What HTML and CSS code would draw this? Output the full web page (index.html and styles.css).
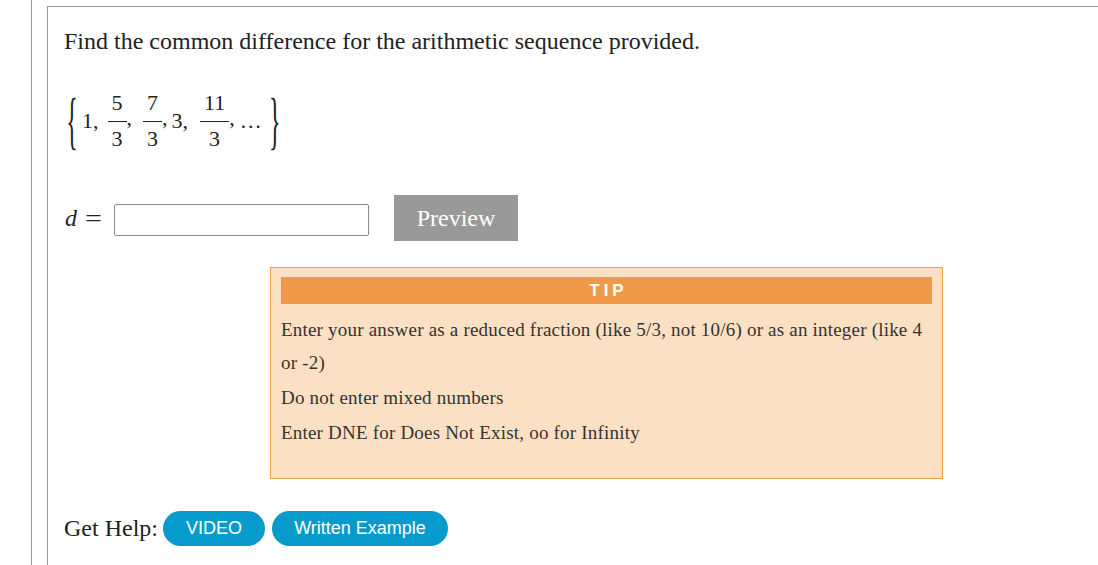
FILE: index.html
```html
<!DOCTYPE html>
<html>
<head>
<meta charset="utf-8">
<link rel="stylesheet" href="styles.css">
</head>
<body>
<div class="page">
  <div class="question">
    <p class="prompt">Find the common difference for the arithmetic sequence provided.</p>
    <div class="math">
      <span class="brace brace-open">{</span>
      <span class="num num-one">1,</span>
      <span class="frac frac-a"><span class="top">5</span><span class="bot">3</span></span>
      <span class="comma comma-a">,</span>
      <span class="frac"><span class="top">7</span><span class="bot">3</span></span>
      <span class="comma comma-b">,</span>
      <span class="num num-three">3,</span>
      <span class="frac"><span class="top">11</span><span class="bot">3</span></span>
      <span class="comma comma-c">,</span>
      <span class="dots">…</span>
      <span class="brace brace-close">}</span>
    </div>
    <div class="answer-row">
      <span class="var">d</span><span class="eq">=</span>
      <input class="answer" type="text">
      <button class="preview">Preview</button>
    </div>
    <div class="tip">
      <div class="tip-head">TIP</div>
      <p class="tip-line tip-first">Enter your answer as a reduced fraction (like 5/3, not 10/6) or as an integer (like 4 or -2)</p>
      <p class="tip-line">Do not enter mixed numbers</p>
      <p class="tip-line">Enter DNE for Does Not Exist, oo for Infinity</p>
    </div>
    <div class="help">
      <span class="help-label">Get Help:</span>
      <button class="pill pill-video">VIDEO</button>
      <button class="pill pill-written">Written Example</button>
    </div>
  </div>
</div>
</body>
</html>
```

FILE: styles.css
```css
html, body {
  margin: 0;
  padding: 0;
  background: #fff;
}
body {
  font-family: "Liberation Serif", "Times New Roman", serif;
  color: #222;
  width: 1098px;
  height: 565px;
  overflow: hidden;
}
.page {
  margin-left: 31px;
  border-left: 1px solid #999;
  height: 565px;
  padding-left: 15px;
  padding-top: 6px;
  box-sizing: border-box;
  overflow: hidden;
}
.question {
  border-top: 1px solid #999;
  border-left: 1px solid #999;
  height: 559px;
  box-sizing: border-box;
  padding: 20px 16px 0 16px;
}
.prompt {
  margin: 0;
  font-size: 24px;
  line-height: 28px;
}
.math {
  margin-top: 34px;
  display: flex;
  align-items: center;
  height: 64px;
  font-family: "Liberation Serif", "Times New Roman", serif;
  font-size: 22px;
}
.brace {
  display: inline-block;
  font-size: 24px;
  line-height: 24px;
  transform: scaleY(2.6);
  width: 12px;
  text-align: center;
}
.brace-open {
  margin-left: 2px;
}
.brace-close {
  margin-left: 7px;
}
.num {
  line-height: 22px;
}
.num-one {
  margin-left: 4px;
  margin-right: 9px;
}
.num-three {
  margin-right: 12px;
}
.frac {
  display: inline-flex;
  flex-direction: column;
  align-items: center;
  font-family: "Liberation Serif", "Times New Roman", serif;
}
.frac .top,
.frac .bot {
  font-family: "Liberation Serif", "Times New Roman", serif;
  font-size: 22px;
  line-height: 22px;
}
.frac .top {
  padding: 0 4px 7px 4px;
  border-bottom: 1px solid #222;
  text-align: center;
}
.frac .bot {
  padding-top: 6px;
}
.comma {
  line-height: 22px;
  position: relative;
  top: -3px;
}
.comma-a {
  margin-right: 11px;
}
.comma-b {
  margin-right: 4px;
}
.comma-c {
  margin-right: 5px;
}
.dots {
  line-height: 22px;
}
.answer-row {
  margin-top: 42px;
  display: flex;
  align-items: center;
  height: 46px;
}
.var {
  font-style: italic;
  font-size: 24px;
  width: 21px;
  padding-left: 1px;
  box-sizing: border-box;
}
.eq {
  display: inline-block;
  font-size: 24px;
  width: 29px;
  transform: scaleX(1.25);
  transform-origin: left center;
}
.answer {
  width: 255px;
  height: 32px;
  box-sizing: border-box;
  border: 1px solid #8a8a8a;
  border-radius: 2px;
  margin: 0;
  padding: 0 4px;
  position: relative;
  top: 2px;
}
.preview {
  margin-left: 25px;
  width: 124px;
  height: 46px;
  background: #999;
  color: #fff;
  border: none;
  font-family: "Liberation Serif", "Times New Roman", serif;
  font-size: 24px;
  padding: 0;
}
.tip {
  margin-top: 26px;
  margin-left: 206px;
  width: 673px;
  height: 212px;
  box-sizing: border-box;
  border: 1px solid #f0a04a;
  background: #fce0c4;
  padding: 9px 10px 10px 10px;
}
.tip-head {
  background: #f09a49;
  color: #fff;
  height: 27px;
  line-height: 27px;
  text-align: center;
  font-family: "Liberation Sans", Arial, sans-serif;
  font-weight: bold;
  font-size: 17px;
  letter-spacing: 4px;
  padding-left: 4px;
}
.tip-line {
  margin: 0 0 2px 0;
  font-size: 19px;
  letter-spacing: 0.2px;
  line-height: 33px;
  color: #333;
}
.tip-first {
  margin-top: 9px;
}
.help {
  margin-top: 32px;
  display: flex;
  align-items: center;
}
.help-label {
  font-size: 24px;
  margin-right: 5px;
}
.pill {
  height: 35px;
  border: none;
  border-radius: 18px;
  background: #079bcd;
  color: #fff;
  font-family: "Liberation Sans", Arial, sans-serif;
  font-size: 18px;
  padding: 0;
  margin-right: 7px;
}
.pill-video {
  width: 102px;
}
.pill-written {
  width: 176px;
}
```
